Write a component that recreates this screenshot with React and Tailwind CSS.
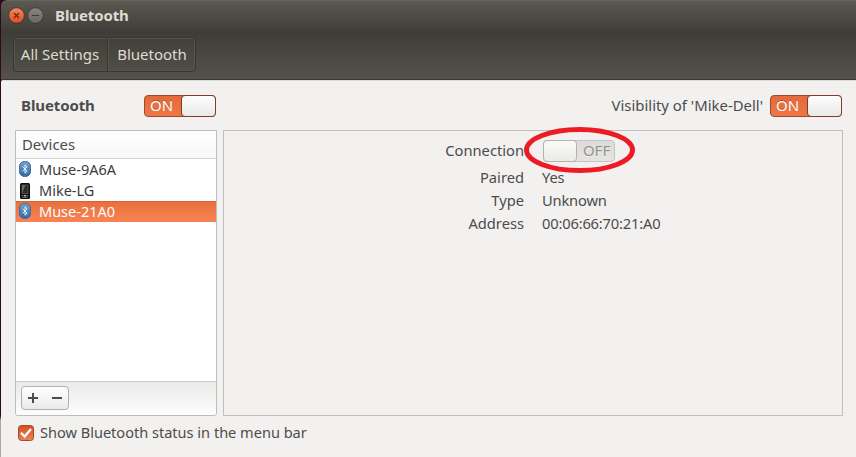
import React from "react";

function Switch({ on }) {
  if (on) {
    return (
      <div className="flex h-[22px] w-[72px] shrink-0 rounded-[4px] border border-[#9c4a2c] bg-linear-to-b from-[#e5693a] to-[#ee7746]">
        <span className="flex w-[36px] items-center justify-center pr-[3px] pb-[2px] text-[15px] leading-none text-white [text-shadow:0_-1px_0_#b5502a]">ON</span>
        <div className="-my-px -mr-px h-[22px] w-[35px] rounded-[4px] border border-[#7d3f2a] bg-linear-to-b from-[#fdfdfd] to-[#e9e9e8]" />
      </div>
    );
  }
  return (
    <div className="flex h-[22px] w-[72px] shrink-0 rounded-[4px] border border-[#c4c3c1] bg-linear-to-b from-[#dddcda] to-[#e6e5e3]">
      <div className="-my-px -ml-px h-[22px] w-[35px] rounded-[4px] border border-[#b3b2b0] bg-linear-to-b from-[#fbfbfa] to-[#ebeae9]" />
      <span className="flex w-[38px] items-center justify-center pl-[2px] text-[15px] leading-none text-[#95928f] [text-shadow:0_1px_0_#f4f3f2]">OFF</span>
    </div>
  );
}

function BluetoothIcon() {
  return (
    <svg width="14" height="16" viewBox="0 0 14 16" className="-mt-px shrink-0">
      <defs>
        <linearGradient id="bt" x1="0" y1="0" x2="0" y2="1">
          <stop offset="0" stopColor="#76a3ce" />
          <stop offset="1" stopColor="#2d68a8" />
        </linearGradient>
      </defs>
      <rect x="1.5" y="0.5" width="11" height="15" rx="4.8" fill="url(#bt)" stroke="#3b6c9e" />
      <path d="M4.6 5.7 9.2 10.2 7 12.2V3.8L9.2 5.8 4.6 10.3" fill="none" stroke="#eef4fa" strokeWidth="0.95" />
    </svg>
  );
}

function PhoneIcon() {
  return (
    <svg width="14" height="16" viewBox="0 0 14 16" className="shrink-0">
      <rect x="2" y="0" width="10" height="16" rx="1.5" fill="#0c0c0c" />
      <rect x="4" y="2" width="6" height="8.5" fill="#2b2b2b" stroke="#5f5f5f" strokeWidth="0.8" />
      <path d="M4.2 10V2.3h3.2z" fill="#707070" />
      <path d="M3.5 12.5h2M8.5 12.5h2M4 14.3h6" stroke="#8a8a8a" strokeWidth="0.8" />
      <circle cx="7" cy="12.8" r="1" fill="#bbb" />
    </svg>
  );
}

function TitleBar() {
  return (
    <div className="flex h-[30px] shrink-0 items-center rounded-tl-[6px] border-t border-[#66645d] bg-linear-to-b from-[#5b5951] to-[#403f3a] pl-[7px]">
      <svg width="38" height="18" viewBox="0 0 38 18" className="mt-px">
        <defs>
          <linearGradient id="cl" x1="0" y1="0" x2="0" y2="1">
            <stop offset="0" stopColor="#f68a63" />
            <stop offset="1" stopColor="#e34b1c" />
          </linearGradient>
          <linearGradient id="mn" x1="0" y1="0" x2="0" y2="1">
            <stop offset="0" stopColor="#86847b" />
            <stop offset="1" stopColor="#6a6861" />
          </linearGradient>
        </defs>
        <circle cx="8.5" cy="8.5" r="7.8" fill="url(#cl)" stroke="#35322d" strokeWidth="0.8" />
        <path d="m6 6 5 5m0-5-5 5" stroke="#5a2a1a" strokeWidth="1.2" />
        <circle cx="27.5" cy="8.5" r="7.8" fill="url(#mn)" stroke="#35342f" strokeWidth="0.8" />
        <path d="M24 8.5h7" stroke="#3b3a35" strokeWidth="1" />
      </svg>
      <span className="ml-[9px] text-[15px] leading-none font-bold tracking-[-0.1px] text-[#dfdbd2]">Bluetooth</span>
    </div>
  );
}

function DeviceRow({ icon, name, selected }) {
  return (
    <div className={"flex h-[21px] items-center gap-[7px] pl-[2px] " + (selected ? "bg-linear-to-b from-[#e86e3d] to-[#f98453] text-white shadow-[inset_0_1px_0_#dc6032]" : "text-[#3c3c3c]")}>
      {icon}
      <span className="text-[14.5px] leading-none">{name}</span>
    </div>
  );
}

function Detail({ label, value, tall }) {
  return (
    <div className={"flex items-center text-[14.7px] leading-none " + (tall ? "h-[31px]" : "h-[23px]")}>
      <span className="w-[300px] text-right">{label}</span>
      <span className={tall ? "ml-[19px]" : "ml-[18px] tracking-[-0.18px]"}>{value}</span>
    </div>
  );
}

export default function App() {
  return (
    <div className="relative h-[457px] w-[856px] overflow-hidden bg-linear-to-b from-[#2c0b20] from-[91%] to-[#aaa8a6] to-[92%] pl-px font-['Noto_Sans','Open_Sans',sans-serif] text-[#4c4c4c]">
      <div className="flex h-full flex-col">
        <TitleBar />
        <header className="flex h-[50px] shrink-0 items-start border-b border-[#393833] bg-linear-to-b from-[#3d3c37] to-[#54524a] pt-[7px] pl-[12px]">
          <nav className="flex h-[35px] items-center rounded-[4px] border border-[#37362f] text-[15px] leading-none text-[#dfdbd2] shadow-[inset_0_0_0_1px_#56544c]">
            <span className="flex h-full w-[94px] items-center justify-center border-r border-[#37362f] pr-px">All Settings</span>
            <span className="flex h-full w-[87px] items-center justify-center border-l border-[#56544c]">Bluetooth</span>
          </nav>
        </header>
        <main className="flex grow flex-col rounded-tl-[2px] border-t border-[#dddbd9] bg-[#f2f1f0] pt-[14px] pr-[13px] pl-[14px]">
          <div className="flex h-[22px] items-center text-[14.9px] leading-none">
            <span className="ml-[6px] w-[123px] pb-[2px] text-[15px] font-bold tracking-[-0.1px]">Bluetooth</span>
            <Switch on />
            <span className="mr-[7px] ml-auto pb-[2px]">Visibility of 'Mike-Dell'</span>
            <div className="mr-px"><Switch on /></div>
          </div>
          <div className="mt-[13px] flex h-[286px] gap-[6px]">
            <section className="flex w-[202px] flex-col rounded-b-[3px] border border-[#bebdbb] bg-white">
              <div className="flex h-[28px] shrink-0 items-center border-b border-[#d6d5d4] bg-linear-to-b from-white to-[#f7f7f7] pl-[6px] text-[14.9px] leading-none">Devices</div>
              <DeviceRow icon={<BluetoothIcon />} name="Muse-9A6A" />
              <DeviceRow icon={<PhoneIcon />} name="Mike-LG" />
              <DeviceRow icon={<BluetoothIcon />} name="Muse-21A0" selected />
              <div className="mt-auto flex h-[34px] items-center rounded-b-[3px] border-t border-[#cccbc9] bg-linear-to-b from-[#ebeae9] to-[#fdfdfd] pb-px pl-[5px]">
                <div className="flex h-[24px] w-[48px] items-center justify-center rounded-[4px] border border-[#b2b0ae] bg-linear-to-b from-white to-[#ebeae9]">
                  <svg width="34" height="12" viewBox="0 0 34 12">
                    <path d="M0 6h10M5 1v10M24 6h10" stroke="#4c4c4c" strokeWidth="2" />
                  </svg>
                </div>
              </div>
            </section>
            <section className="w-[620px] border border-[#c1c0be] pt-[4px]">
              <Detail label="Connection" value={<Switch />} tall />
              <Detail label="Paired" value="Yes" />
              <Detail label="Type" value="Unknown" />
              <Detail label="Address" value="00:06:66:70:21:A0" />
            </section>
          </div>
          <label className="mt-[9px] ml-[3px] flex h-[16px] items-center gap-[6px] text-[14.55px] leading-none">
            <svg width="16" height="16" viewBox="0 0 16 16">
              <defs>
                <linearGradient id="ck" x1="0" y1="0" x2="0" y2="1">
                  <stop offset="0" stopColor="#d64f20" />
                  <stop offset="1" stopColor="#e7835b" />
                </linearGradient>
              </defs>
              <rect x="0.5" y="0.5" width="15" height="15" rx="3" fill="url(#ck)" stroke="#a84a29" />
              <path d="m3 7.7 3.6 3.8L13 4" fill="none" stroke="#fff" strokeWidth="2.2" />
            </svg>
            <span className="pb-[2px]">Show Bluetooth status in the menu bar</span>
          </label>
        </main>
      </div>
      <svg className="absolute top-[124px] left-[520px]" width="120" height="52" viewBox="0 0 120 52">
        <ellipse cx="59.5" cy="26" rx="53" ry="20.5" fill="none" stroke="#ed1c24" strokeWidth="5" />
      </svg>
    </div>
  );
}
